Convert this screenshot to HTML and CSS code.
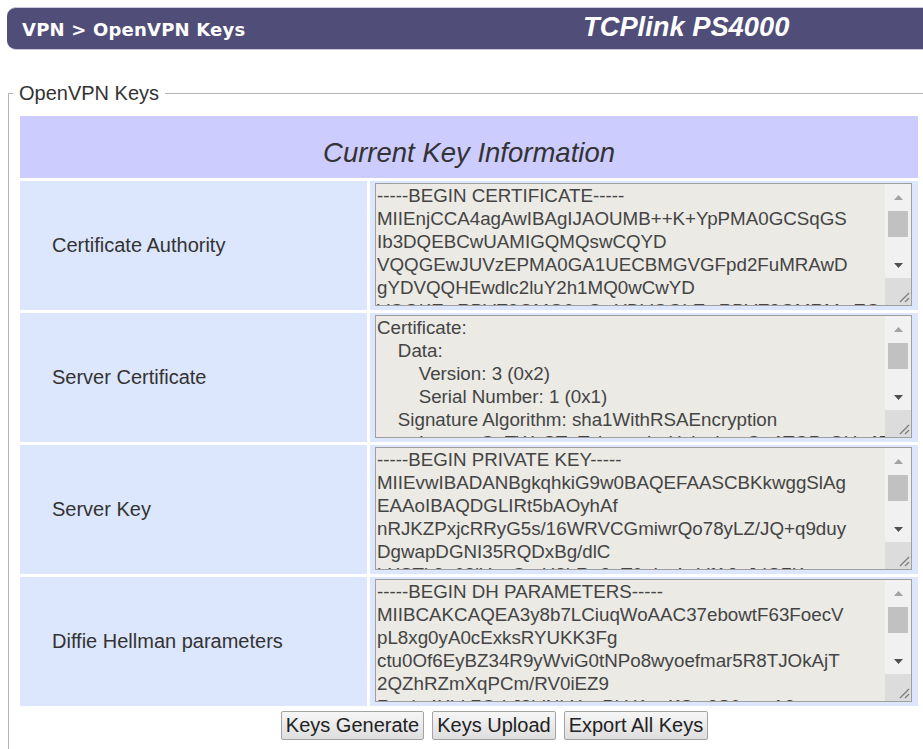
FILE: index.html
```html
<!DOCTYPE html>
<html lang="en">
<head>
<meta charset="utf-8">
<title>VPN &gt; OpenVPN Keys</title>
<link rel="stylesheet" href="styles.css">
</head>
<body>
<div class="titlebar">
  <span class="crumb">VPN &gt; OpenVPN Keys</span>
  <span class="model">TCPlink PS4000</span>
</div>

<fieldset class="keys">
  <legend>OpenVPN Keys</legend>
  <table class="keytable">
    <colgroup><col class="col-label"><col class="col-value"></colgroup>
    <tr><th colspan="2" class="caption">Current Key Information</th></tr>
    <tr>
      <td class="label">Certificate Authority</td>
      <td class="value">
        <div class="box">
          <textarea readonly wrap="off">-----BEGIN CERTIFICATE-----
MIIEnjCCA4agAwIBAgIJAOUMB++K+YpPMA0GCSqGS
Ib3DQEBCwUAMIGQMQswCQYD
VQQGEwJUVzEPMA0GA1UECBMGVGFpd2FuMRAwD
gYDVQQHEwdlc2luY2h1MQ0wCwYD
VQQKEwRBVE9QMQ0wCwYDVQQLEwRBVE9QMRMwEQ
YDVQQDEwpBVE9QIENBIDAxMR8wHQYJ
KoZIhvcNAQkBFhBzdXBwb3J0QGF0b3AuY29tMB4X
DTE3MDMwMTA4MDAwMFoXDTI3MDIyNzA4MDAw
MFowgZAxCzAJBgNVBAYTAlRXMQ8wDQYDVQQIEwZU
-----END CERTIFICATE-----</textarea>
          <div class="vbar" aria-hidden="true">
            <span class="sb-btn"><svg width="9" height="5" viewBox="0 0 9 5"><polygon points="0,5 4.5,0 9,5" fill="#a3a3a3"/></svg></span>
            <span class="sb-track"><span class="sb-thumb"></span></span>
            <span class="sb-btn"><svg width="9" height="5" viewBox="0 0 9 5"><polygon points="0,0 9,0 4.5,5" fill="#505050"/></svg></span>
            <span class="sb-grip"><svg width="26" height="27" viewBox="0 0 26 27"><path d="M24 15 L15 24 M24 20 L20 24" stroke="#7a7a7a" stroke-width="1.2" fill="none"/></svg></span>
          </div>
        </div>
      </td>
    </tr>
    <tr>
      <td class="label">Server Certificate</td>
      <td class="value">
        <div class="box">
          <textarea readonly wrap="off">Certificate:
    Data:
        Version: 3 (0x2)
        Serial Number: 1 (0x1)
    Signature Algorithm: sha1WithRSAEncryption
        Issuer: C=TW, ST=Taiwan, L=Hsinchu, O=ATOP, OU=ATOP, CN=ATOP CA 01
        Validity
            Not Before: Mar  1 08:00:00 2017 GMT
            Not After : Feb 27 08:00:00 2027 GMT
        Subject: C=TW, ST=Taiwan, O=ATOP, OU=ATOP, CN=server
        Subject Public Key Info:
            Public Key Algorithm: rsaEncryption</textarea>
          <div class="vbar" aria-hidden="true">
            <span class="sb-btn"><svg width="9" height="5" viewBox="0 0 9 5"><polygon points="0,5 4.5,0 9,5" fill="#a3a3a3"/></svg></span>
            <span class="sb-track"><span class="sb-thumb"></span></span>
            <span class="sb-btn"><svg width="9" height="5" viewBox="0 0 9 5"><polygon points="0,0 9,0 4.5,5" fill="#505050"/></svg></span>
            <span class="sb-grip"><svg width="26" height="27" viewBox="0 0 26 27"><path d="M24 15 L15 24 M24 20 L20 24" stroke="#7a7a7a" stroke-width="1.2" fill="none"/></svg></span>
          </div>
        </div>
      </td>
    </tr>
    <tr>
      <td class="label">Server Key</td>
      <td class="value">
        <div class="box">
          <textarea readonly wrap="off">-----BEGIN PRIVATE KEY-----
MIIEvwIBADANBgkqhkiG9w0BAQEFAASCBKkwggSlAg
EAAoIBAQDGLIRt5bAOyhAf
nRJKZPxjcRRyG5s/16WRVCGmiwrQo78yLZ/JQ+q9duy
DgwapDGNI35RQDxBg/dlC
hXSTk2e68lYcqGmH8bRe3nT0pLx4wVfA2sJdQ7Kc
Nm5tFZgU1oRiBy6aE9qVwXl3Dp0HcJsY4
Tr2Wk8eLbQfN6yPzA1vMhS5dGoIu7CjXx0Rn
Ye3KpUq9sWlB4aF2DcZmT8vHgN1oJiRxE6
-----END PRIVATE KEY-----</textarea>
          <div class="vbar" aria-hidden="true">
            <span class="sb-btn"><svg width="9" height="5" viewBox="0 0 9 5"><polygon points="0,5 4.5,0 9,5" fill="#a3a3a3"/></svg></span>
            <span class="sb-track"><span class="sb-thumb"></span></span>
            <span class="sb-btn"><svg width="9" height="5" viewBox="0 0 9 5"><polygon points="0,0 9,0 4.5,5" fill="#505050"/></svg></span>
            <span class="sb-grip"><svg width="26" height="27" viewBox="0 0 26 27"><path d="M24 15 L15 24 M24 20 L20 24" stroke="#7a7a7a" stroke-width="1.2" fill="none"/></svg></span>
          </div>
        </div>
      </td>
    </tr>
    <tr>
      <td class="label">Diffie Hellman parameters</td>
      <td class="value">
        <div class="box">
          <textarea readonly wrap="off">-----BEGIN DH PARAMETERS-----
MIIBCAKCAQEA3y8b7LCiuqWoAAC37ebowtF63FoecV
pL8xg0yA0cExksRYUKK3Fg
ctu0Of6EyBZ34R9yWviG0tNPo8wyoefmar5R8TJOkAjT
2QZhRZmXqPCm/RV0iEZ9
Ruaht4XbL7QrkJ8idNhXgvPkH1m4fOw2S0tmpA3
yGcDe9Lz6VnWq5Bs1KoRuYhT0JxF7iMa
Pv4NbE2lOdZt8CgAw3QrUsHy6XmKf1Jo9
gT2QwAE=
-----END DH PARAMETERS-----</textarea>
          <div class="vbar" aria-hidden="true">
            <span class="sb-btn"><svg width="9" height="5" viewBox="0 0 9 5"><polygon points="0,5 4.5,0 9,5" fill="#a3a3a3"/></svg></span>
            <span class="sb-track"><span class="sb-thumb"></span></span>
            <span class="sb-btn"><svg width="9" height="5" viewBox="0 0 9 5"><polygon points="0,0 9,0 4.5,5" fill="#505050"/></svg></span>
            <span class="sb-grip"><svg width="26" height="27" viewBox="0 0 26 27"><path d="M24 15 L15 24 M24 20 L20 24" stroke="#7a7a7a" stroke-width="1.2" fill="none"/></svg></span>
          </div>
        </div>
      </td>
    </tr>
  </table>
  <div class="actions">
    <button type="button">Keys Generate</button>
    <button type="button">Keys Upload</button>
    <button type="button">Export All Keys</button>
  </div>
</fieldset>
</body>
</html>
```

FILE: styles.css
```css
html, body {
  margin: 0;
  padding: 0;
  background: #ffffff;
  overflow: hidden;
}

body {
  font-family: "Liberation Sans", Arial, sans-serif;
  font-size: 20px;
  color: #333333;
}

/* page title bar */
.titlebar {
  display: flex;
  align-items: center;
  margin: 7px 0 0 7px;
  height: 41px;
  background: #504e78;
  border-top: 1px solid #c9c8dc;
  border-bottom: 1px solid #c9c8dc;
  border-radius: 9px 0 0 9px;
  color: #ffffff;
}

.crumb {
  width: 561px;
  padding-left: 15px;
  font-family: "DejaVu Sans", Verdana, sans-serif;
  font-weight: 700;
  font-size: 18px;
  letter-spacing: 0.2px;
  padding-top: 2px;
}

.model {
  font-family: "Liberation Sans", Arial, sans-serif;
  font-weight: 700;
  font-style: italic;
  font-size: 27.3px;
  padding-bottom: 4px;
}

/* key fieldset */
.keys {
  box-sizing: border-box;
  width: 973px;
  margin: 32px 0 0 8px;
  padding: 8px 8px 12px 8px;
  border: 1px solid #b4b4b4;
}

.keys legend {
  margin-left: -4px;
  padding: 0 6px;
  font-size: 20px;
  line-height: 23px;
  color: #333333;
}

.keytable {
  table-layout: fixed;
  width: 904px;
  border-collapse: separate;
  border-spacing: 3px;
}

.col-label { width: 347px; }
.col-value { width: 548px; }

.caption {
  height: 62px;
  box-sizing: border-box;
  padding: 12px 0 0 0;
  background: #ccccff;
  font-weight: normal;
  font-style: italic;
  font-size: 27.5px;
  color: #333333;
  text-align: center;
  vertical-align: middle;
}

.label {
  padding: 0 0 0 32px;
  background: #dce6fc;
  vertical-align: middle;
  color: #333333;
}

.value {
  padding: 2px 6px 4px 5px;
  background: #dce6fc;
  vertical-align: top;
}

/* read-only key box with a classic vertical scrollbar */
.box {
  position: relative;
  width: 537px;
  height: 123px;
}

.box textarea {
  display: block;
  box-sizing: border-box;
  width: 100%;
  height: 100%;
  margin: 0;
  padding: 0 0 0 1px;
  border: 1px solid #9f9f9f;
  background: #ebeae4;
  color: #444444;
  font-family: "Liberation Sans", Arial, sans-serif;
  font-size: 18.75px;
  line-height: 23px;
  overflow: hidden;
  resize: none;
}

.vbar {
  position: absolute;
  top: 1px;
  right: 1px;
  bottom: 1px;
  width: 26px;
  display: flex;
  flex-direction: column;
  background: #f1f1f1;
}

.sb-btn {
  display: flex;
  align-items: center;
  justify-content: center;
  height: 26px;
}

.sb-btn svg { display: block; }

.sb-track {
  flex: 1;
  display: flex;
  flex-direction: column;
  padding: 1px 3px 0 3px;
}

.sb-thumb {
  display: block;
  height: 26px;
  background: #c1c1c1;
}

.sb-grip {
  display: block;
  height: 27px;
  background: #dcdcdc;
}

.sb-grip svg { display: block; }

/* action buttons */
.actions {
  display: flex;
  justify-content: center;
  gap: 8px;
  margin-top: 2px;
}

.actions button {
  margin: 0;
  padding: 2px 4px;
  border: 1px solid #a3a3a3;
  border-radius: 2px;
  background: linear-gradient(#f6f6f6, #dedede);
  font-family: "Liberation Sans", Arial, sans-serif;
  font-size: 20px;
  line-height: 23px;
  color: #222222;
}
```
